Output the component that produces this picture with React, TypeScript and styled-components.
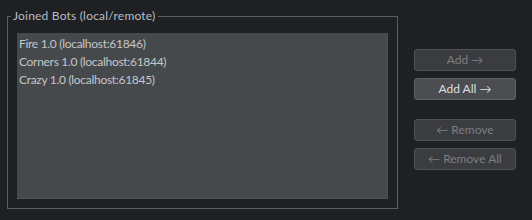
import React from "react";
import styled, { createGlobalStyle } from "styled-components";

const Global = createGlobalStyle`
  html, body { margin: 0; padding: 0; background: #1f2024; }
  body { width: 532px; height: 220px; overflow: hidden; font-family: Lato, "Noto Sans", sans-serif; }
`;

const Page = styled.div`
  display: flex;
  align-items: flex-start;
  padding: 8px 0 0 7px;
  gap: 16px;
`;

const Group = styled.fieldset`
  box-sizing: border-box;
  margin: 0;
  width: 391px;
  height: 201px;
  padding: 9px 9px 9px 9px;
  border: 1px solid #5b5c5f;
  display: flex;
  flex-direction: column;
  min-width: 0;
`;

const Title = styled.legend`
  padding: 0 2px;
  margin-left: -6px;
  font-size: 12px;
  line-height: 16px;
  letter-spacing: 0.2px;
  color: #b9bcc0;
`;

const List = styled.ul`
  list-style: none;
  margin: 0;
  padding: 2px 0 0 2px;
  flex: 1;
  background: #46494c;
  border-right: 1px solid #505356;
  border-bottom: 1px solid #505356;
`;

const Item = styled.li`
  font-size: 12px;
  line-height: 18px;
  letter-spacing: -0.3px;
  color: #c3c6ca;
`;

const Buttons = styled.div`
  display: flex;
  flex-direction: column;
  margin-top: 41px;
  width: 102px;
`;

const Button = styled.button<{ $enabled?: boolean; $gap?: number }>`
  box-sizing: border-box;
  height: 22px;
  margin-top: ${(p) => p.$gap ?? 0}px;
  border: 1px solid ${(p) => (p.$enabled ? "#5e6064" : "#4f5155")};
  border-radius: 3px;
  background: ${(p) => (p.$enabled ? "#4b4d51" : "#3a3c40")};
  color: ${(p) => (p.$enabled ? "#dcdfe3" : "#7c7f83")};
  font-family: Lato, "Noto Sans", sans-serif;
  font-size: 12px;
  padding: 0;
  line-height: 20px;
`;

const bots = [
  "Fire 1.0 (localhost:61846)",
  "Corners 1.0 (localhost:61844)",
  "Crazy 1.0 (localhost:61845)",
];

export default function App() {
  return (
    <>
      <Global />
      <Page>
        <Group>
          <Title>Joined Bots (local/remote)</Title>
          <List>
            {bots.map((b) => (
              <Item key={b}>{b}</Item>
            ))}
          </List>
        </Group>
        <Buttons>
          <Button disabled>Add →</Button>
          <Button $enabled $gap={7}>Add All →</Button>
          <Button disabled $gap={19}>← Remove</Button>
          <Button disabled $gap={7}>← Remove All</Button>
        </Buttons>
      </Page>
    </>
  );
}
